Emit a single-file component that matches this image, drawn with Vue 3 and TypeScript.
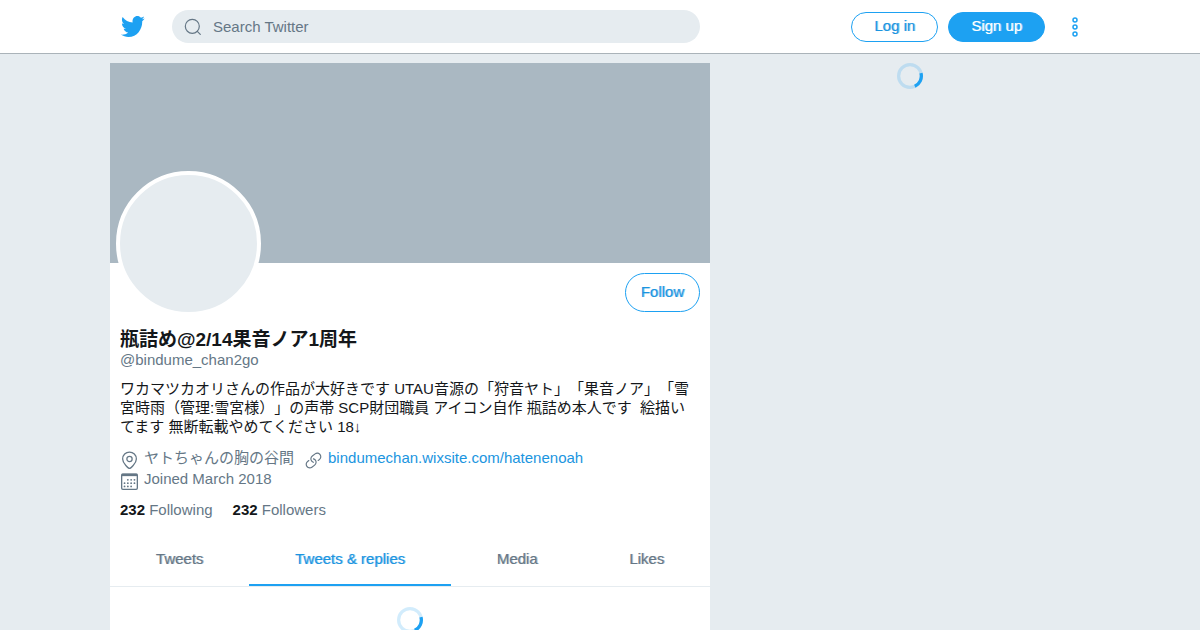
<script setup lang="ts">
import { ref } from 'vue'

interface Tab {
  id: string
  label: string
}

const tabs: Tab[] = [
  { id: 'tweets', label: 'Tweets' },
  { id: 'replies', label: 'Tweets & replies' },
  { id: 'media', label: 'Media' },
  { id: 'likes', label: 'Likes' },
]
const activeTab = ref('replies')
const query = ref('')

const bio = [
  'ワカマツカオリさんの作品が大好きです UTAU音源の「狩音ヤト」「果音ノア」「雪',
  '宮時雨（管理:雪宮様）」の声帯 SCP財団職員 アイコン自作 瓶詰め本人です  絵描い',
  'てます 無断転載やめてください 18↓',
].join('\n')

const calendarDots = [
  [9.5, 9.5], [13.5, 9.5], [17.5, 9.5],
  [5.5, 13.5], [9.5, 13.5], [13.5, 13.5], [17.5, 13.5],
  [5.5, 17.5], [9.5, 17.5], [13.5, 17.5],
]
</script>

<template>
  <div class="page">
    <header class="topbar">
      <div class="topbar-inner">
        <a class="logo" href="#" aria-label="Twitter">
          <svg viewBox="0 2.75 24 18.5" preserveAspectRatio="none" aria-hidden="true">
            <path d="M23.643 4.937c-.835.37-1.732.62-2.675.733.962-.576 1.7-1.49 2.048-2.578-.9.534-1.897.922-2.958 1.13-.85-.904-2.06-1.47-3.4-1.47-2.572 0-4.658 2.086-4.658 4.66 0 .364.042.718.12 1.06-3.873-.195-7.304-2.05-9.602-4.868-.4.69-.63 1.49-.63 2.342 0 1.616.823 3.043 2.072 3.878-.764-.025-1.482-.234-2.11-.583v.06c0 2.257 1.605 4.14 3.737 4.568-.392.106-.803.162-1.227.162-.3 0-.593-.028-.877-.082.593 1.85 2.313 3.198 4.352 3.234-1.595 1.25-3.604 1.995-5.786 1.995-.376 0-.747-.022-1.112-.065 2.062 1.323 4.51 2.093 7.14 2.093 8.57 0 13.255-7.098 13.255-13.254 0-.2-.005-.402-.014-.602.91-.658 1.7-1.477 2.323-2.41z" />
          </svg>
        </a>
        <label class="search">
          <svg viewBox="0 0 18 18" aria-hidden="true">
            <circle cx="8.3" cy="8.3" r="7" />
            <path d="M13.3 13.3L16.3 16.3" />
          </svg>
          <input v-model="query" type="search" placeholder="Search Twitter" aria-label="Search Twitter" />
        </label>
        <nav class="account">
          <a class="pill medium" href="#">Log in</a>
          <a class="pill solid medium" href="#">Sign up</a>
          <button class="more" type="button" aria-label="More options">
            <svg viewBox="0 0 8 22" aria-hidden="true">
              <circle cx="4" cy="4" r="2" />
              <circle cx="4" cy="11" r="2" />
              <circle cx="4" cy="18" r="2" />
            </svg>
          </button>
        </nav>
      </div>
    </header>

    <div class="columns">
      <main class="profile">
        <div class="banner"></div>
        <div class="identity">
          <div class="avatar"></div>
          <button class="follow medium" type="button">Follow</button>
        </div>
        <section class="details">
          <h1>瓶詰め@2/14果音ノア1周年</h1>
          <p class="handle">@bindume_chan2go</p>
          <p class="bio">{{ bio }}</p>
          <div class="meta">
            <span class="meta-item">
              <svg viewBox="0 0 18 18" aria-hidden="true">
                <path d="M9 16.500C8.400 16.500 2.500 12 2.500 7.500a6.500 6.500 0 0 1 13 0C15.500 12 9.600 16.500 9 16.500z" />
                <circle cx="9" cy="7.500" r="2.500" />
              </svg>
              ヤトちゃんの胸の谷間
            </span>
            <span class="meta-item">
              <svg viewBox="0 0 24 24" class="filled" aria-hidden="true">
                <path d="M11.960 14.945c-.067 0-.136-.010-.203-.027-1.130-.318-2.097-.986-2.795-1.932-.832-1.125-1.176-2.508-.968-3.893s.942-2.605 2.068-3.438l3.530-2.608c2.322-1.716 5.610-1.224 7.330 1.100.830 1.127 1.175 2.510.967 3.895s-.943 2.605-2.070 3.438l-1.480 1.094c-.333.246-.804.175-1.050-.158-.246-.334-.176-.804.158-1.050l1.480-1.095c.803-.592 1.327-1.463 1.476-2.450.148-.988-.098-1.975-.690-2.778-1.225-1.656-3.572-2.010-5.230-.784l-3.530 2.608c-.802.593-1.326 1.464-1.475 2.450-.150.990.097 1.975.690 2.778.498.675 1.187 1.150 1.992 1.377.400.114.633.528.520.928-.092.330-.394.547-.722.547z" />
                <path d="M7.270 22.054c-1.610 0-3.197-.735-4.225-2.125-.832-1.127-1.176-2.510-.968-3.894s.943-2.605 2.070-3.438l1.478-1.094c.334-.245.805-.175 1.050.158s.177.804-.157 1.050l-1.480 1.095c-.803.593-1.326 1.464-1.475 2.450-.148.990.097 1.975.690 2.778 1.225 1.657 3.570 2.010 5.230.785l3.528-2.608c1.658-1.225 2.010-3.570.785-5.230-.498-.674-1.187-1.150-1.992-1.376-.400-.113-.633-.527-.520-.927.112-.400.528-.630.926-.522 1.130.318 2.096.986 2.794 1.932 1.717 2.324 1.224 5.612-1.100 7.330l-3.530 2.608c-.933.693-2.023 1.026-3.105 1.026z" />
              </svg>
              <a href="#">bindumechan.wixsite.com/hatenenoah</a>
            </span>
          </div>
          <div class="meta">
            <span class="meta-item">
              <svg viewBox="0 0 23 23" aria-hidden="true">
                <rect class="frame" x="2" y="2.500" width="19" height="18.500" rx="1.500" />
                <path class="bar" d="M2 3.500h19" />
                <circle v-for="([x, y], i) in calendarDots" :key="i" class="dot" :cx="x" :cy="y" r="1.100" />
              </svg>
              Joined March 2018
            </span>
          </div>
          <div class="counts">
            <a href="#"><strong>232</strong> Following</a>
            <a href="#"><strong>232</strong> Followers</a>
          </div>
        </section>
        <nav class="tabs">
          <button
            v-for="tab in tabs"
            :key="tab.id"
            type="button"
            class="medium"
            :class="{ active: tab.id === activeTab }"
            @click="activeTab = tab.id"
          >
            {{ tab.label }}
          </button>
        </nav>
        <div class="loading">
          <svg class="spinner" viewBox="0 0 32 32" role="img" aria-label="Loading">
            <circle cx="16" cy="16" r="14" />
            <path d="M29.500 12.400A14 14 0 0 1 21.900 28.700" />
          </svg>
        </div>
      </main>
      <aside class="side">
        <svg class="spinner" viewBox="0 0 32 32" role="img" aria-label="Loading">
          <circle cx="16" cy="16" r="14" />
          <path d="M29.500 12.400A14 14 0 0 1 21.900 28.700" />
        </svg>
      </aside>
    </div>
  </div>
</template>

<style>
body {
  margin: 0;
  background: #e6ecf0;
}
</style>

<style scoped>
* {
  box-sizing: border-box;
}
.page {
  height: 100vh;
  overflow: hidden;
  display: flex;
  flex-direction: column;
  background: #e6ecf0;
  color: #14171a;
  font-family: "Liberation Sans", "Noto Sans CJK JP", sans-serif;
  font-size: 15px;
  line-height: 19px;
}
a {
  color: inherit;
  text-decoration: none;
}
button,
input {
  font: inherit;
  margin: 0;
  padding: 0;
  border: 0;
  background: none;
}
svg {
  display: block;
  flex: none;
}
.medium {
  text-shadow: 1px 0 rgb(from currentColor r g b / 50%);
}
.topbar {
  flex: none;
  background: #fff;
  border-bottom: 1px solid #aab3b9;
}
.topbar-inner,
.columns {
  width: 100%;
  max-width: 980px;
  margin: 0 auto;
  display: flex;
}
.topbar-inner {
  height: 53px;
  align-items: center;
  padding-left: 10px;
}
.logo {
  margin-right: 27px;
}
.logo svg {
  width: 25px;
  height: 21px;
  fill: #1da1f2;
}
.search {
  flex: 0 1 528px;
  height: 33px;
  display: flex;
  align-items: center;
  gap: 11px;
  padding: 0 12px;
  border-radius: 17px;
  background: #e6ecf0;
}
.search svg {
  width: 18px;
  height: 18px;
  fill: none;
  stroke: #657786;
  stroke-width: 1.2;
  stroke-linecap: round;
}
.search input {
  flex: 1;
  min-width: 0;
  outline: 0;
  color: #14171a;
}
.search input::placeholder {
  color: #657786;
  opacity: 1;
}
.account {
  margin-left: auto;
  display: flex;
  align-items: center;
  gap: 10px;
}
.pill {
  height: 30px;
  padding: 0 22px;
  border: 1px solid #1da1f2;
  border-radius: 15px;
  color: #1b95e0;
  line-height: 26px;
}
.pill.solid {
  background: #1da1f2;
  color: #fff;
}
.more {
  width: 30px;
  height: 30px;
  margin-left: 5px;
  display: flex;
  align-items: center;
  justify-content: center;
}
.more svg {
  width: 8px;
  height: 22px;
  fill: none;
  stroke: #1da1f2;
  stroke-width: 1.5;
}
.columns {
  flex: 1;
  min-height: 0;
  padding-top: 9px;
  gap: 20px;
}
.profile {
  flex: 0 1 600px;
  background: #fff;
}
.side {
  flex: 1;
  display: flex;
  justify-content: center;
}
.banner {
  height: 200px;
  background: #aab8c2;
}
.identity {
  height: 66px;
  display: flex;
  justify-content: space-between;
  padding: 10px 10px 0 6px;
}
.avatar {
  width: 145px;
  height: 145px;
  margin-top: -102px;
  border: 4px solid #fff;
  border-radius: 50%;
  background: #e6ecf0;
}
.follow {
  height: 39px;
  padding: 0 15px 2px;
  border: 1px solid #1da1f2;
  border-radius: 20px;
  color: #1b95e0;
}
.details {
  padding: 0 10px;
}
h1,
p {
  margin: 0;
}
h1 {
  font-size: 19px;
  line-height: 21px;
}
.handle {
  color: #657786;
}
.bio {
  margin: 10px 0 11px;
  white-space: pre-wrap;
  text-spacing-trim: space-all;
}
.meta {
  height: 21px;
  display: flex;
  align-items: center;
  gap: 10px;
  color: #657786;
}
.meta-item {
  display: flex;
  align-items: center;
  gap: 5px;
}
.meta-item svg {
  width: 19px;
  height: 19px;
  margin: 5px 0 0;
  fill: none;
  stroke: #657786;
  stroke-width: 1.2;
}
.meta-item .filled {
  fill: #657786;
  stroke: none;
}
.meta-item .frame {
  stroke-width: 1.6;
}
.meta-item .bar {
  stroke-width: 3;
}
.meta-item .dot {
  fill: #657786;
  stroke: none;
}
.meta-item a {
  color: #1b95e0;
}
.counts {
  display: flex;
  gap: 20px;
  margin-top: 10px;
  line-height: 21px;
  color: #657786;
}
.counts strong {
  color: #14171a;
}
.tabs {
  display: flex;
  margin-top: 13px;
  border-bottom: 1px solid #e6ecf0;
}
.tabs button {
  flex: 1 1 auto;
  height: 53px;
  border-bottom: 2px solid transparent;
  color: #657786;
}
.tabs .active {
  border-color: #1da1f2;
  color: #1b95e0;
}
.loading {
  display: flex;
  justify-content: center;
  padding: 20px 0;
}
.spinner {
  width: 26px;
  height: 26px;
  fill: none;
  stroke: #1da1f2;
  stroke-width: 4;
}
.spinner circle {
  opacity: 0.2;
}
</style>
